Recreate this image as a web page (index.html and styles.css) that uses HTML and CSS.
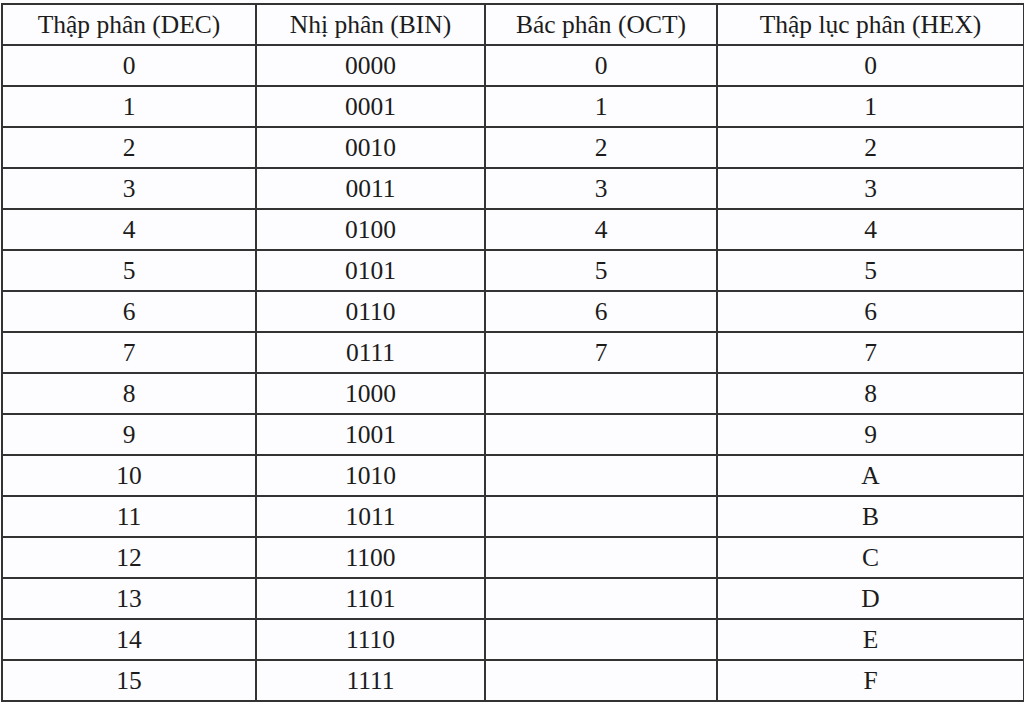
FILE: index.html
```html
<!DOCTYPE html>
<html lang="vi">
<head>
<meta charset="utf-8">
<title>Bảng chuyển đổi hệ cơ số</title>
<link rel="stylesheet" href="styles.css">
</head>
<body>
<table class="conv">
  <colgroup>
    <col class="c1"><col class="c2"><col class="c3"><col class="c4">
  </colgroup>
  <thead>
    <tr><th>Thập phân (DEC)</th><th>Nhị phân (BIN)</th><th>Bác phân (OCT)</th><th>Thập lục phân (HEX)</th></tr>
  </thead>
  <tbody>
    <tr><td>0</td><td>0000</td><td>0</td><td>0</td></tr>
    <tr><td>1</td><td>0001</td><td>1</td><td>1</td></tr>
    <tr><td>2</td><td>0010</td><td>2</td><td>2</td></tr>
    <tr><td>3</td><td>0011</td><td>3</td><td>3</td></tr>
    <tr><td>4</td><td>0100</td><td>4</td><td>4</td></tr>
    <tr><td>5</td><td>0101</td><td>5</td><td>5</td></tr>
    <tr><td>6</td><td>0110</td><td>6</td><td>6</td></tr>
    <tr><td>7</td><td>0111</td><td>7</td><td>7</td></tr>
    <tr><td>8</td><td>1000</td><td></td><td>8</td></tr>
    <tr><td>9</td><td>1001</td><td></td><td>9</td></tr>
    <tr><td>10</td><td>1010</td><td></td><td>A</td></tr>
    <tr><td>11</td><td>1011</td><td></td><td>B</td></tr>
    <tr><td>12</td><td>1100</td><td></td><td>C</td></tr>
    <tr><td>13</td><td>1101</td><td></td><td>D</td></tr>
    <tr><td>14</td><td>1110</td><td></td><td>E</td></tr>
    <tr><td>15</td><td>1111</td><td></td><td>F</td></tr>
  </tbody>
</table>
</body>
</html>
```

FILE: styles.css
```css
html, body {
  margin: 0;
  padding: 0;
  background: #fdfdff;
}
body {
  padding: 3px 0 0 1px;
  font-family: "Liberation Serif", "Times New Roman", serif;
  color: #1c1c1c;
}
.conv {
  border-collapse: collapse;
  table-layout: fixed;
  width: 1022px;
  font-size: 25.5px;
}
.c1 { width: 254px; }
.c2 { width: 229px; }
.c3 { width: 232px; }
.c4 { width: 307px; }
.conv th,
.conv td {
  border: 2px solid #333;
  height: 39px;
  padding: 0;
  text-align: center;
  vertical-align: middle;
  font-weight: normal;
  line-height: 39px;
}
```
